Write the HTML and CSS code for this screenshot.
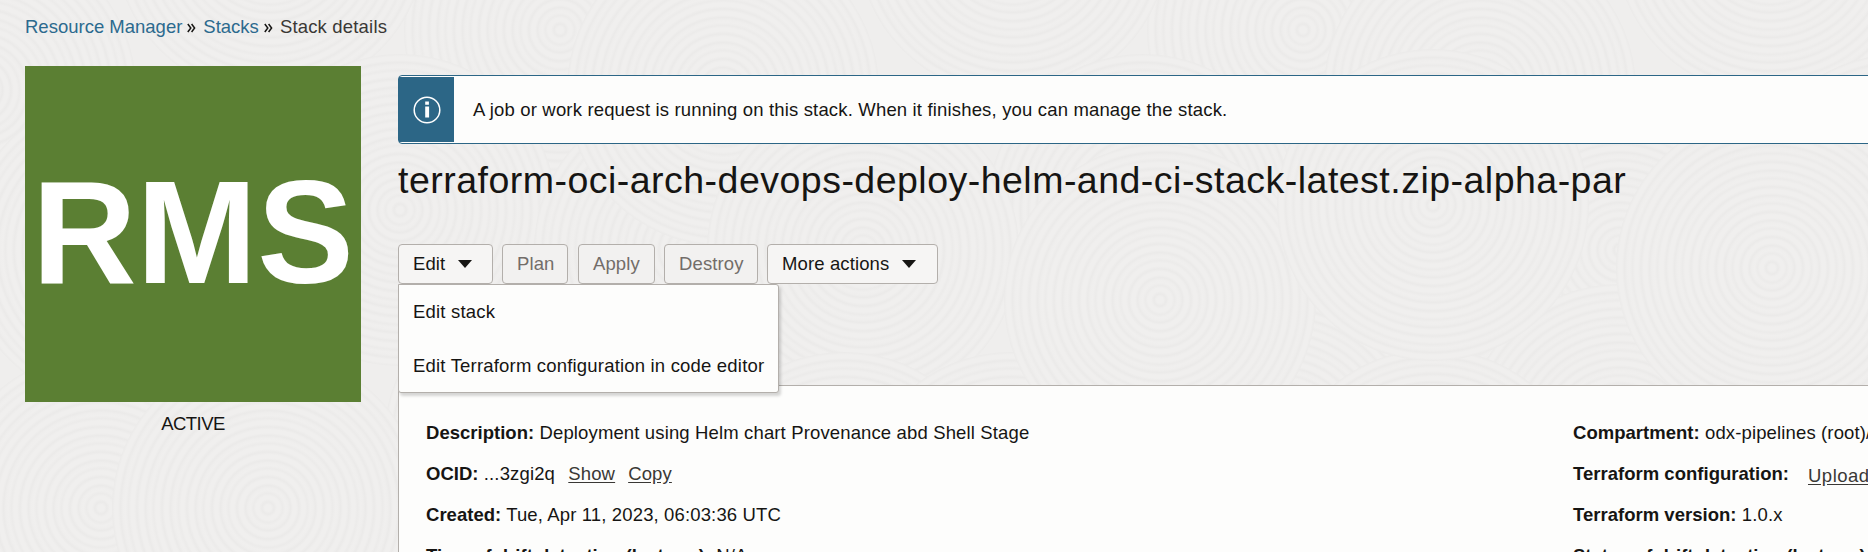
FILE: index.html
```
<!DOCTYPE html>
<html lang="en">
<head>
<meta charset="utf-8">
<title>Stack details</title>
<link rel="stylesheet" href="styles.css">
</head>
<body>
<svg class="texture" width="1868" height="552" aria-hidden="true">
  <defs>
    <radialGradient id="rings" gradientUnits="userSpaceOnUse" cx="0" cy="0" r="25" spreadMethod="repeat">
      <stop offset="0" stop-color="#f0efee"/>
      <stop offset=".13" stop-color="#f0efee"/>
      <stop offset=".24" stop-color="#ebeae9"/>
      <stop offset=".36" stop-color="#f0efee"/>
      <stop offset=".48" stop-color="#f0efee"/>
      <stop offset=".58" stop-color="#ecebea"/>
      <stop offset=".7" stop-color="#f0efee"/>
      <stop offset=".8" stop-color="#efeeed"/>
      <stop offset=".9" stop-color="#ebeae9"/>
      <stop offset="1" stop-color="#f0efee"/>
    </radialGradient>
    <circle id="disc" r="156" fill="url(#rings)"/>
    <g id="tile">
      <use href="#disc" x="-20" y="90"/>
      <use href="#disc" x="560" y="30"/>
      <use href="#disc" x="270" y="-60"/>
      <use href="#disc" x="400" y="210"/>
      <use href="#disc" x="120" y="250"/>
      <use href="#disc" x="690" y="250"/>
      <use href="#disc" x="540" y="440"/>
      <use href="#disc" x="101" y="508"/>
      <use href="#disc" x="268" y="508"/>
      <use href="#disc" x="720" y="540"/>
    </g>
  </defs>
  <rect width="1868" height="552" fill="#efeeed"/>
  <use href="#tile" x="0"/>
  <use href="#tile" x="743"/>
  <use href="#tile" x="1500"/>
  <use href="#disc" x="1160" y="300"/>
  <use href="#disc" x="1620" y="440"/>
  <use href="#disc" x="1433" y="505"/>
  <use href="#disc" x="1433" y="205"/>
  <use href="#disc" x="1772" y="268"/>
</svg>

<div class="page">
  <nav class="breadcrumb">
    <a href="#">Resource Manager</a>
    <svg class="chev" width="9" height="10" viewBox="0 0 9 10"><path d="M.8 1 3.8 5 .8 9M4.6 1l3 4-3 4"/></svg>
    <a href="#">Stacks</a>
    <svg class="chev" width="9" height="10" viewBox="0 0 9 10"><path d="M.8 1 3.8 5 .8 9M4.6 1l3 4-3 4"/></svg>
    <span class="current">Stack details</span>
  </nav>
  <div class="columns">
    <aside class="side">
      <div class="badge"><span class="badge-text">RMS</span></div>
      <div class="status">ACTIVE</div>
    </aside>
    <main class="main">
      <div class="banner">
        <div class="banner-icon">
          <svg width="28" height="28" viewBox="0 0 28 28"><circle cx="14" cy="14" r="12.8" fill="none" stroke="#fff" stroke-width="1.5"/><path fill="#fff" d="M12.2 5.5h3.7v3.2h-3.7zM12.2 10.6h3.9v10.8h-3.9z"/></svg>
        </div>
        <p class="banner-text">A job or work request is running on this stack. When it finishes, you can manage the stack.</p>
      </div>
      <h1 class="title">terraform-oci-arch-devops-deploy-helm-and-ci-stack-latest.zip-alpha-par</h1>
      <div class="actions">
        <div class="edit">
          <button class="btn btn-edit">Edit <i class="caret"></i></button>
          <ul class="menu">
            <li>Edit stack</li>
            <li>Edit Terraform configuration in code editor</li>
          </ul>
        </div>
        <button class="btn btn-plan off">Plan</button>
        <button class="btn btn-apply off">Apply</button>
        <button class="btn btn-destroy off">Destroy</button>
        <button class="btn btn-more">More actions <i class="caret"></i></button>
      </div>
      <section class="panel">
        <div class="col">
          <div class="row"><b>Description:</b> Deployment using Helm chart Provenance abd Shell Stage</div>
          <div class="row"><b>OCID:</b> ...3zgi2q <a href="#">Show</a><a href="#">Copy</a></div>
          <div class="row"><b>Created:</b> Tue, Apr 11, 2023, 06:03:36 UTC</div>
          <div class="row"><b>Time of drift detection (last run):</b> N/A</div>
        </div>
        <div class="col">
          <div class="row"><b>Compartment:</b> odx-pipelines (root)/</div>
          <div class="row"><b>Terraform configuration:</b><a href="#" class="upload">Uploaded</a></div>
          <div class="row"><b>Terraform version:</b> 1.0.x</div>
          <div class="row"><b>Status of drift detection (last run):</b></div>
        </div>
      </section>
    </main>
  </div>
</div>
</body>
</html>
```
FILE: styles.css
```
* { box-sizing: border-box; }
html, body { height: 100%; }
body {
  margin: 0;
  overflow: hidden;
  background: #efeeed;
  color: #161513;
  font: 18.5px/24px "Liberation Sans", Arial, sans-serif;
  letter-spacing: .14px;
}
.texture { position: absolute; left: 0; top: 0; z-index: -1; }
.page { width: 1868px; height: 552px; overflow: hidden; padding: 15px 0 0 25px; }
.breadcrumb { display: flex; align-items: center; height: 24px; letter-spacing: 0; color: #3a3835; }
.breadcrumb a { color: #2c6a8e; text-decoration: none; }
.breadcrumb .current { letter-spacing: .18px; }
.chev { margin: 1px 7px 0 5px; fill: none; stroke: #161513; stroke-width: 1.5; }
.columns { display: flex; gap: 37px; }
.side { width: 336px; padding-top: 27px; flex: none; }
.badge { height: 336px; background: #5b7f33; color: #fff; overflow: hidden; padding: 86px 0 0 7px; }
.badge-text { display: inline-block; font: bold 147px/160px "Liberation Sans", Arial, sans-serif; letter-spacing: 0; transform: scaleX(.985); transform-origin: 0 0; }
.status { margin-top: 10px; text-align: center; letter-spacing: -.55px; }
.main { flex: none; width: 1480px; padding-top: 36px; }
.banner { display: flex; height: 69px; padding: 1px 0; border: 1px solid #2c6686; border-radius: 4px; background: #fdfdfc; }
.banner-icon { display: flex; align-items: center; justify-content: center; width: 55px; background: #2c6686; }
.banner-text { margin: 0 0 0 19px; line-height: 66px; letter-spacing: .165px; }
.title { margin: 15px 0 0; height: 43px; font-size: 37.5px; line-height: 42px; font-weight: 400; white-space: nowrap; letter-spacing: .48px; }
.actions { display: flex; height: 40px; margin-top: 42px; }
.btn { display: flex; align-items: center; height: 40px; padding: 0 0 1px 14px; border: 1px solid #b3afab; border-radius: 4px; background: #f6f5f4; color: #161513; font: inherit; letter-spacing: .12px; white-space: nowrap; }
.off { background: #f2f1f0; color: #726d69; }
.btn-edit { width: 95px; }
.btn-plan { width: 66px; margin-left: 9px; }
.btn-apply { width: 77px; margin-left: 10px; }
.btn-destroy { width: 94px; margin-left: 9px; }
.btn-more { width: 171px; margin-left: 9px; }
.caret { margin: 1px 0 0 13px; border: 7px solid transparent; border-top: 8px solid #161513; border-bottom: 0; }
.edit { position: relative; }
.menu { position: absolute; left: 0; top: 40px; width: 381px; height: 109px; margin: 0; padding: 0 0 0 14px; list-style: none; background: #fdfdfc; border: 1px solid #b3afab; border-radius: 0 3px 3px 3px; box-shadow: 2px 3px 3px rgba(0,0,0,.16); white-space: nowrap; letter-spacing: .19px; z-index: 2; }
.menu li { height: 54px; line-height: 53px; }
.panel { display: grid; grid-template-columns: 1147px 1fr; margin-top: 101px; height: 240px; padding: 35px 0 0 27px; border: 1px solid #b3afab; background: #fdfdfc; }
.row { height: 41px; white-space: nowrap; }
.row b { letter-spacing: .02px; }
.row a { color: #3a3835; margin-left: 8px; margin-right: 5px; text-underline-offset: 2px; }
.row .upload { position: relative; top: 2px; margin-left: 19px; letter-spacing: .5px; }
```
